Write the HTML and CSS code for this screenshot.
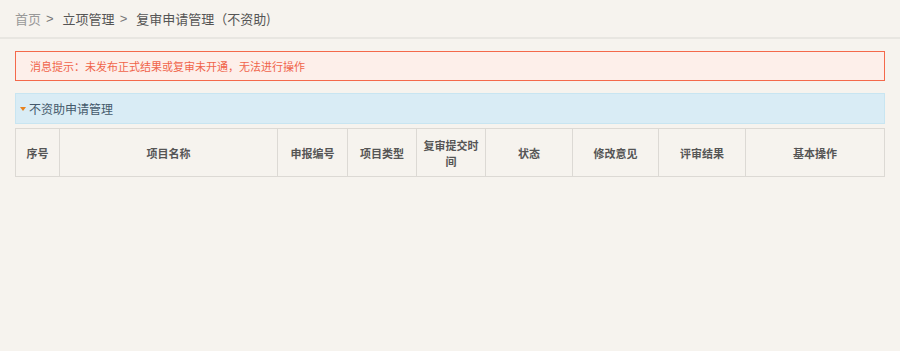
FILE: index.html
```html
<!DOCTYPE html>
<html lang="zh-cn">
<head>
  <meta charset="UTF-8" />
  <title>复审申请管理（不资助）</title>
  <link rel="stylesheet" href="styles.css">
</head>
<body>

  <div class="crumbs">
    <span class="home">首页</span>
    <span class="sep">&gt;</span>
    <span>立项管理</span>
    <span class="sep">&gt;</span>
    <span>复审申请管理（不资助)</span>
  </div>

  <div class="content">
    <div class="alert">消息提示：未发布正式结果或复审未开通，无法进行操作</div>

    <div class="panel-title"><span class="caret"></span>不资助申请管理</div>

    <table class="grid">
      <thead>
        <tr>
          <th class="c-no">序号</th>
          <th class="c-name">项目名称</th>
          <th class="c-code">申报编号</th>
          <th class="c-type">项目类型</th>
          <th class="c-time">复审提交时间</th>
          <th class="c-state">状态</th>
          <th class="c-edit">修改意见</th>
          <th class="c-result">评审结果</th>
          <th class="c-op">基本操作</th>
        </tr>
      </thead>
      <tbody></tbody>
    </table>
  </div>

</body>
</html>
```

FILE: styles.css
```css
body {
  margin: 0;
  background: #f6f3ee;
  font-family: "Noto Sans CJK SC", "Liberation Sans", sans-serif;
  color: #555;
}

/* Navegação */
.crumbs {
  height: 37px;
  padding-left: 15px;
  display: flex;
  align-items: center;
  font-size: 13px;
  color: #555;
  border-bottom: 2px solid #e8e6e1;
}

.crumbs .home {
  color: #999;
}

.crumbs .sep {
  color: #777;
  margin: 0 9px 0 5px;
  font-family: "Liberation Sans", sans-serif;
}

.content {
  padding: 12px 15px 0 15px;
}

.alert {
  height: 28px;
  line-height: 28px;
  padding-left: 14px;
  border: 1px solid #f4694b;
  background: #fdefea;
  color: #f0644a;
  font-size: 11px;
}

.panel-title {
  margin-top: 12px;
  height: 29px;
  line-height: 28px;
  border: 1px solid #c8e5f1;
  background: #d9ecf5;
  color: #44596b;
  font-size: 12px;
  display: flex;
  align-items: center;
}

.caret {
  width: 0;
  height: 0;
  margin: 0 3px 0 4px;
  border-left: 3px solid transparent;
  border-right: 3px solid transparent;
  border-top: 4px solid #e8821e;
}

.grid {
  margin-top: 4px;
  width: 870px;
  border-collapse: collapse;
  table-layout: fixed;
}

.grid th {
  box-sizing: border-box;
  height: 48px;
  border: 1px solid #dcd9d4;
  font-size: 11px;
  font-weight: bold;
  color: #555;
  line-height: 16px;
  padding: 0 6px;
  text-align: center;
}

.c-no { width: 44px; }
.c-name { width: 218px; }
.c-code { width: 70px; }
.c-type { width: 69px; }
.c-time { width: 69px; }
.c-state { width: 87px; }
.c-edit { width: 86px; }
.c-result { width: 87px; }
.c-op { width: 139px; }
```
